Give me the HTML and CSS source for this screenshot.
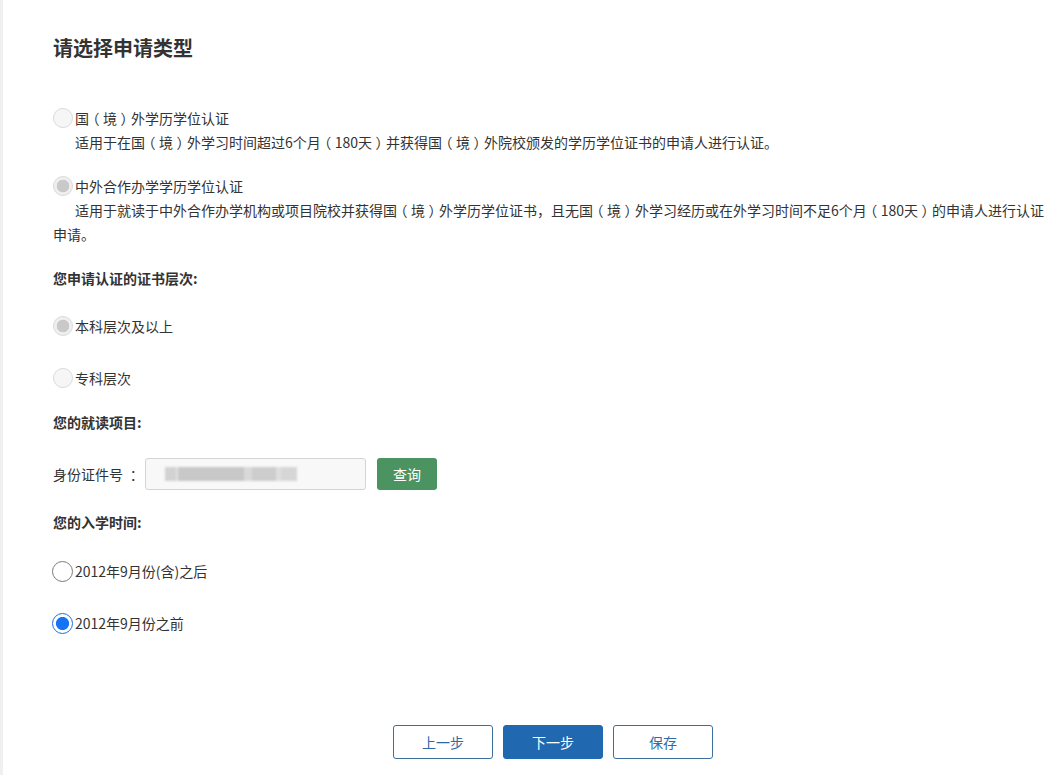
FILE: index.html
```html
<!DOCTYPE html>
<html lang="zh-CN">
<head>
<meta charset="utf-8">
<title>请选择申请类型</title>
<link rel="stylesheet" href="styles.css">
</head>
<body>
<div class="page">
  <main class="content">
    <h1 class="title">请选择申请类型</h1>

    <label class="opt opt-first">
      <input type="radio" name="type" class="r-soft">
      <span>国<span class="fw">（</span>境<span class="fw">）</span>外学历学位认证</span>
    </label>
    <p class="desc">适用于在国<span class="fw">（</span>境<span class="fw">）</span>外学习时间超过6个月<span class="fw">（</span>180天<span class="fw">）</span>并获得国<span class="fw">（</span>境<span class="fw">）</span>外院校颁发的学历学位证书的申请人进行认证。</p>

    <label class="opt opt-second">
      <input type="radio" name="type" class="r-soft" checked>
      <span>中外合作办学学历学位认证</span>
    </label>
    <p class="desc">适用于就读于中外合作办学机构或项目院校并获得国<span class="fw">（</span>境<span class="fw">）</span>外学历学位证书，且无国<span class="fw">（</span>境<span class="fw">）</span>外学习经历或在外学习时间不足6个月<span class="fw">（</span>180天<span class="fw">）</span>的申请人进行认证申请。</p>

    <h2 class="sub sub-level">您申请认证的证书层次:</h2>

    <label class="opt opt-l1">
      <input type="radio" name="level" class="r-soft" checked>
      <span>本科层次及以上</span>
    </label>
    <label class="opt opt-l2">
      <input type="radio" name="level" class="r-soft">
      <span>专科层次</span>
    </label>

    <h2 class="sub sub-project">您的就读项目:</h2>

    <div class="id-row">
      <span class="id-label">身份证件号 <span class="fw">：</span></span>
      <div class="id-input"><span class="masked"></span></div>
      <button class="btn-query" type="button">查询</button>
    </div>

    <h2 class="sub sub-time">您的入学时间:</h2>

    <label class="opt opt-t1">
      <input type="radio" name="time" class="r-native">
      <span>2012年9月份(含)之后</span>
    </label>
    <label class="opt opt-t2">
      <input type="radio" name="time" class="r-native" checked>
      <span>2012年9月份之前</span>
    </label>

    <div class="actions">
      <button class="btn btn-outline" type="button">上一步</button>
      <button class="btn btn-primary" type="button">下一步</button>
      <button class="btn btn-outline" type="button">保存</button>
    </div>
  </main>
</div>
</body>
</html>
```

FILE: styles.css
```css
html, body {
  margin: 0;
  padding: 0;
  background: #fff;
  overflow: hidden;
}

body {
  font-family: "Noto Sans CJK SC", "Noto Sans", sans-serif;
  color: #333;
  font-size: 14px;
}

/* half-width punctuation glyph, padded back to a full em so it sits centred */
.fw {
  font-feature-settings: "halt" 1;
  padding: 0 3.5px;
}

.page {
  border-left: 3px solid #f0f0f0;
  min-height: 775px;
  box-sizing: border-box;
}

.content {
  width: 1000px;
  margin-left: 50px;
  padding-top: 34px;
}

.title {
  margin: 0;
  font-size: 20px;
  line-height: 28px;
  font-weight: bold;
  color: #333;
}

.opt {
  display: flex;
  align-items: center;
  height: 24px;
  line-height: 24px;
  cursor: pointer;
}

.opt > span {
  margin-left: 2px;
}

.opt-first { margin-top: 44px; }
.opt-second { margin-top: 20px; }
.opt-l1 { margin-top: 24px; }
.opt-l2 { margin-top: 28px; }
.opt-t1 { margin-top: 25px; }
.opt-t2 { margin-top: 28px; }

.desc {
  margin: 0;
  line-height: 24px;
  text-indent: 22px;
}

.sub {
  margin: 0;
  font-size: 14px;
  line-height: 24px;
  font-weight: bold;
  color: #333;
}

.sub-level { margin-top: 20px; }
.sub-project { margin-top: 20px; }
.sub-time { margin-top: 20px; }

/* soft grey radios */
.r-soft {
  appearance: none;
  -webkit-appearance: none;
  margin: 0;
  width: 20px;
  height: 20px;
  border-radius: 50%;
  border: 1px solid #dadada;
  background: #f6f6f6;
  box-sizing: border-box;
  flex: none;
}

.r-soft:checked {
  background: radial-gradient(circle, #c9c9c9 0 6px, #efefef 6.6px);
}

/* native-like radios */
.r-native {
  appearance: none;
  -webkit-appearance: none;
  margin: 0 0 0 -1px;
  width: 21px;
  height: 21px;
  border-radius: 50%;
  border: 1px solid #7a7a7a;
  background: #fff;
  box-sizing: border-box;
  flex: none;
}

.r-native:checked {
  border: 1.5px solid #1a6fe2;
  background: radial-gradient(circle, #1673f2 0 6.2px, #fff 6.9px);
}

.id-row {
  margin-top: 24px;
  display: flex;
  align-items: center;
  height: 32px;
}

.id-label {
  width: 92px;
  flex: none;
}

.id-input {
  width: 221px;
  height: 32px;
  box-sizing: border-box;
  border: 1px solid #d4d4d4;
  border-radius: 3px;
  background: #f8f8f8;
  display: flex;
  align-items: center;
  padding-left: 19px;
}

.masked {
  display: block;
  width: 132px;
  height: 14px;
  background: linear-gradient(90deg, #d2d2d2 0 8%, #e2e2e2 8% 10%, #c8c8c8 10% 60%, #d9d9d9 60% 66%, #cdcdcd 66% 84%, #dedede 84% 88%, #d6d6d6 88% 100%);
  filter: blur(1px);
}

.btn-query {
  margin-left: 11px;
  width: 60px;
  height: 32px;
  border: none;
  border-radius: 3px;
  background: #4b9361;
  color: #fff;
  font-family: inherit;
  font-size: 14px;
  padding: 0;
}

.actions {
  margin-top: 90px;
  display: flex;
  justify-content: center;
  gap: 10px;
}

.btn {
  width: 100px;
  height: 34px;
  box-sizing: border-box;
  border-radius: 3px;
  font-family: inherit;
  font-size: 14px;
  padding: 0;
}

.btn-outline {
  background: #fff;
  border: 1px solid #3c6f9e;
  color: #2f6aa5;
}

.btn-primary {
  background: #2068b0;
  border: 1px solid #2068b0;
  color: #fff;
}
```
